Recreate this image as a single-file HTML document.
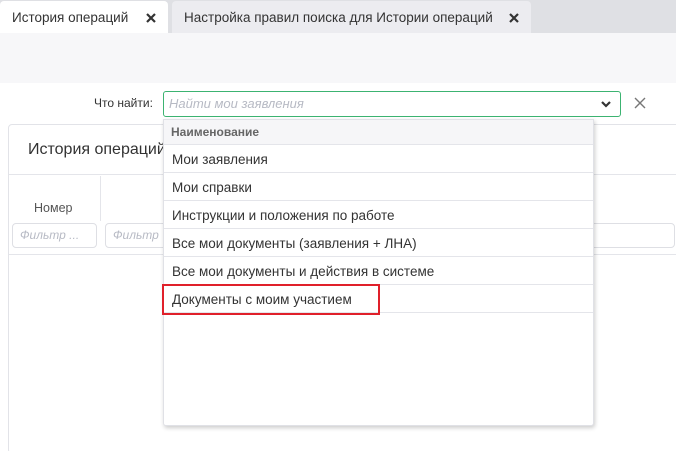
<!DOCTYPE html>
<html style="overflow:hidden;height:451px"><head><meta charset="utf-8"><style>
*{box-sizing:border-box;margin:0;padding:0}
body{width:676px;height:451px;overflow:hidden;background:#fff;font-family:"Liberation Sans",sans-serif;position:relative;color:#333}
.abs{position:absolute}
.tabs{left:0;top:0;width:676px;height:33px;background:#dfe0e4}
.tab{top:1px;height:32px;font-size:13.5px;line-height:34px;padding-left:12px;color:#333;border-radius:4px 4px 0 0;white-space:nowrap}
.x{position:absolute;top:11px;width:12px;height:12px}
.strip{left:0;top:33px;width:676px;height:50px;background:#f7f7f9}
.card{left:8px;top:124px;width:680px;height:330px;border:1px solid #e2e3e8;border-radius:4px;background:#fff}
.dd{left:163px;top:119px;width:431px;height:307px;background:#fff;border:1px solid #e0e1e6;box-shadow:1px 2px 4px rgba(0,0,0,.2);border-radius:0 0 3px 3px}
.row{height:28px;border-bottom:1px solid #e4e5ea;font-size:13.5px;line-height:29px;padding-left:8px;color:#333}
.inp{height:25px;border:1px solid #dedfe4;border-radius:4px;font-style:italic;font-size:12px;color:#b7bac4;line-height:23px;padding-left:7px}
</style></head><body>
<div class="abs tabs"></div>
<div class="abs tab" style="left:0;width:168px;background:#fff">История операций
<svg class="x" style="left:145px" viewBox="0 0 12 12"><path d="M2 2L10 10M10 2L2 10" stroke="#333" stroke-width="2.2"/></svg></div>
<div class="abs tab" style="left:172px;width:359px;background:#ececf0">Настройка правил поиска для Истории операций
<svg class="x" style="left:336px" viewBox="0 0 12 12"><path d="M2 2L10 10M10 2L2 10" stroke="#333" stroke-width="2.2"/></svg></div>
<div class="abs strip"></div>

<div class="abs" style="left:94px;top:96px;font-size:12px;color:#333">Что найти:</div>
<div class="abs" style="left:163px;top:91px;width:458px;height:26px;border:1px solid #3cb371;border-radius:3px;font-style:italic;font-size:13px;color:#b7bac4;line-height:24px;padding-left:5px">Найти мои заявления
<svg class="abs" style="right:8px;top:8px" width="12" height="9" viewBox="0 0 12 9"><path d="M2 2L6 6L10 2" stroke="#333" stroke-width="2.2" fill="none"/></svg></div>
<svg class="abs" style="left:634px;top:97px" width="12" height="12" viewBox="0 0 12 12"><path d="M1 1L11 11M11 1L1 11" stroke="#777" stroke-width="1.4"/></svg>

<div class="abs card"></div>
<div class="abs" style="left:28px;top:141px;font-size:16px;color:#333">История операций</div>
<div class="abs" style="left:9px;top:174px;width:667px;border-top:1px solid #e4e5ea"></div>
<div class="abs" style="left:100px;top:176px;height:45px;border-left:1px solid #e4e5ea"></div>
<div class="abs" style="left:34px;top:201px;font-size:12.5px;color:#555">Номер</div>
<div class="abs inp" style="left:12px;top:223px;width:85px">Фильтр ...</div>
<div class="abs inp" style="left:105px;top:223px;width:570px">Фильтр</div>
<div class="abs" style="left:9px;top:254px;width:667px;border-top:1px solid #e4e5ea"></div>

<div class="abs dd">
<div class="row" style="height:25px;line-height:25px;background:#f6f6f8;font-size:12px;font-weight:bold;color:#666;padding-left:7px">Наименование</div>
<div class="row">Мои заявления</div>
<div class="row">Мои справки</div>
<div class="row">Инструкции и положения по работе</div>
<div class="row">Все мои документы (заявления + ЛНА)</div>
<div class="row">Все мои документы и действия в системе</div>
<div class="row">Документы с моим участием</div>
</div>
<div class="abs" style="left:162px;top:284px;width:218px;height:31px;border:2px solid #e0202a"></div>
</body></html>
